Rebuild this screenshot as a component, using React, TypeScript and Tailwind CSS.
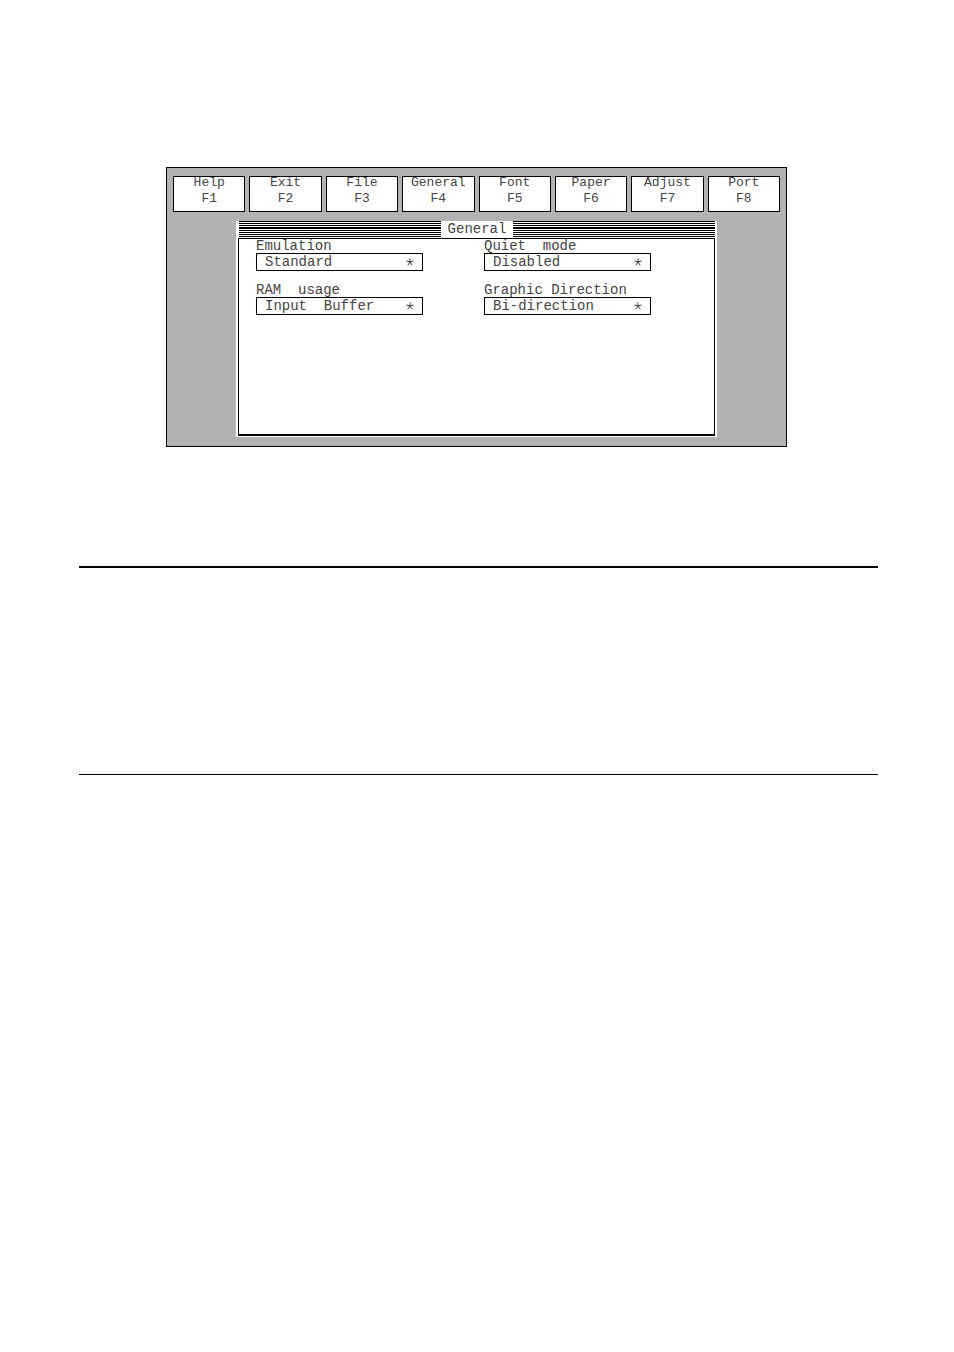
interface MenuItem {
  label: string;
  keyName: string;
}

interface Field {
  id: string;
  label: string;
  value: string;
}

const MENU: MenuItem[] = [
  { label: 'Help', keyName: 'F1' },
  { label: 'Exit', keyName: 'F2' },
  { label: 'File', keyName: 'F3' },
  { label: 'General', keyName: 'F4' },
  { label: 'Font', keyName: 'F5' },
  { label: 'Paper', keyName: 'F6' },
  { label: 'Adjust', keyName: 'F7' },
  { label: 'Port', keyName: 'F8' },
];

const FIELDS: Field[] = [
  { id: 'emulation', label: 'Emulation', value: 'Standard' },
  { id: 'quiet', label: 'Quiet  mode', value: 'Disabled' },
  { id: 'ram', label: 'RAM  usage', value: 'Input  Buffer' },
  { id: 'direction', label: 'Graphic Direction', value: 'Bi-direction' },
];

// Title bar hatching, thicker in the middle
const Stripes = () => (
  <div className="flex-1 flex flex-col gap-px">
    <div className="h-px bg-black" />
    <div className="h-px bg-black" />
    <div className="h-px bg-black" />
    <div className="h-0.5 bg-black" />
    <div className="h-px bg-black" />
    <div className="h-px bg-black" />
    <div className="h-px bg-black" />
    <div className="h-px bg-black" />
  </div>
);

const SelectField = ({ id, label, value }: Field) => (
  <div>
    <label htmlFor={id} className="block h-[14px] leading-[14px] whitespace-pre">{label}</label>
    <div className="relative">
      <select
        id={id}
        defaultValue={value}
        className="block w-full h-[18px] appearance-none rounded-none border border-black bg-white pl-2 leading-4 whitespace-pre"
      >
        <option value={value}>{value.replace(/ /g, '\u00a0')}</option>
      </select>
      <svg viewBox="0 0 8 8" className="absolute right-[9px] top-[5px] w-2 h-2 pointer-events-none" fill="none" stroke="#222" strokeWidth="0.9">
        <path d="M4 4V0.5M4 4L0.5 3M4 4L7.5 3M4 4L1.8 7.2M4 4L6.2 7.2" />
      </svg>
    </div>
  </div>
);

const App = () => {
  return (
    <main className="min-h-screen bg-white px-[79px] pt-[167px] font-['Liberation_Mono',monospace] text-[14px] text-[#444]">
      {/* Setup screen */}
      <section className="ml-[87px] mr-[88px] border border-black bg-[#b2b2b2] pt-2 pb-[9px]">
        <nav className="grid grid-cols-8 gap-1 px-[6px]">
          {MENU.map(item => (
            <button
              key={item.keyName}
              className="h-9 border border-black bg-white pb-[6px] text-[13px] leading-4 flex flex-col items-center justify-center"
            >
              <span>{item.label}</span>
              <span>{item.keyName}</span>
            </button>
          ))}
        </nav>

        {/* General window */}
        <div className="mt-[9px] mx-[69px] bg-white px-0.5 pb-px">
          <header className="flex h-[17px] pl-px">
            <Stripes />
            <h1 className="w-[72px] text-center leading-4">General</h1>
            <Stripes />
          </header>
          <div className="h-[198px] border border-b-2 border-black pl-[17px] pr-[63px]">
            <div className="grid grid-cols-2 gap-x-[61px] gap-y-3">
              {FIELDS.map(field => (
                <SelectField key={field.id} {...field} />
              ))}
            </div>
          </div>
        </div>
      </section>

      {/* Section rules */}
      <hr className="mt-[119px] mr-[-3px] border-t-2 border-black" />
      <hr className="mt-[206px] mr-[-3px] border-t border-black" />
    </main>
  );
};

export default App;
